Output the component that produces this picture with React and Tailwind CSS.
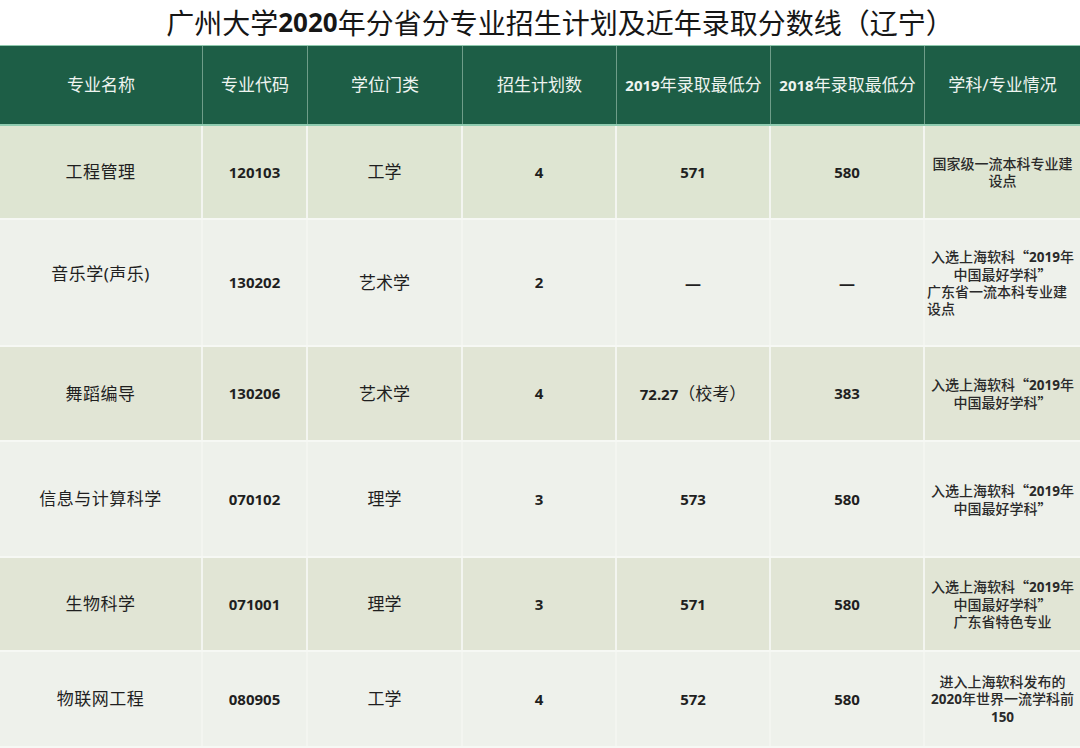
const font = { fontFamily: '"Noto Sans", "Noto Sans CJK SC", sans-serif' };

const cols = ["w-[203px]", "w-[105px]", "w-[155px]", "w-[154px]", "w-[154px]", "w-[154px]", "w-[155px]"];

function Num({ children }) {
  return <span className="font-bold text-[15px]">{children}</span>;
}

function SmallNum({ children }) {
  return <span className="inline-block leading-[17px] font-bold text-[13.5px]">{children}</span>;
}

// full-width chinese quotes
function Q({ children }) {
  return <span className="inline-block leading-[17px] font-['Noto_Sans_CJK_SC'] font-bold">{children}</span>;
}

function Note({ lines, align = "text-center" }) {
  return (
    <div className={"text-[14px] leading-[17px] font-medium text-[#2a2a2a] " + align}>
      {lines.map((l, i) => (
        <div key={i} className="whitespace-nowrap">
          {l}
        </div>
      ))}
    </div>
  );
}

const rankLines = [
  <>
    入选上海软科<Q>“</Q>
    <SmallNum>2019</SmallNum>年
  </>,
  <>
    中国最好学科<Q>”</Q>
  </>,
];

const rows = [
  {
    h: "h-[94px]",
    bg: "bg-[#dee5d2]",
    name: "工程管理",
    code: "120103",
    type: "工学",
    plan: "4",
    s19: <Num>571</Num>,
    s18: <Num>580</Num>,
    note: <Note lines={["国家级一流本科专业建", "设点"]} />,
  },
  {
    h: "h-[127px]",
    bg: "bg-[#eef1eb]",
    name: "音乐学(声乐)",
    nameClass: "pb-[17px]",
    code: "130202",
    type: "艺术学",
    plan: "2",
    s19: <span className="font-bold text-[16px]">—</span>,
    s18: <span className="font-bold text-[16px]">—</span>,
    note: (
      <div className="w-full px-[2px]">
        <Note lines={rankLines} />
        <Note lines={["广东省一流本科专业建", "设点"]} align="text-left" />
      </div>
    ),
  },
  {
    h: "h-[95px]",
    bg: "bg-[#e1e5d5]",
    name: "舞蹈编导",
    code: "130206",
    type: "艺术学",
    plan: "4",
    s19: (
      <span>
        <Num>72.27</Num>（校考）
      </span>
    ),
    s18: <Num>383</Num>,
    note: <Note lines={rankLines} />,
  },
  {
    h: "h-[116px]",
    bg: "bg-[#eef1eb]",
    name: "信息与计算科学",
    code: "070102",
    type: "理学",
    plan: "3",
    s19: <Num>573</Num>,
    s18: <Num>580</Num>,
    note: <Note lines={rankLines} />,
  },
  {
    h: "h-[94px]",
    bg: "bg-[#e1e5d5]",
    name: "生物科学",
    code: "071001",
    type: "理学",
    plan: "3",
    s19: <Num>571</Num>,
    s18: <Num>580</Num>,
    note: <Note lines={[...rankLines, "广东省特色专业"]} />,
  },
  {
    h: "h-[96px]",
    bg: "bg-[#eef1eb]",
    name: "物联网工程",
    code: "080905",
    type: "工学",
    plan: "4",
    s19: <Num>572</Num>,
    s18: <Num>580</Num>,
    note: (
      <Note
        lines={[
          "进入上海软科发布的",
          <>
            <SmallNum>2020</SmallNum>年世界一流学科前
          </>,
          <SmallNum>150</SmallNum>,
        ]}
      />
    ),
  },
];

const headers = [
  "专业名称",
  "专业代码",
  "学位门类",
  "招生计划数",
  <>
    <Num>2019</Num>年录取最低分
  </>,
  <>
    <Num>2018</Num>年录取最低分
  </>,
  "学科/专业情况",
];

export default function App() {
  return (
    <div style={font} className="w-[1080px] h-[748px] overflow-hidden bg-white text-[#1f1f1f]">
      <div className="h-[45px] flex items-center justify-center pl-[40px] text-[28px] text-[#161616] whitespace-nowrap">
        广州大学<span className="font-bold text-[26px]">2020</span>年分省分专业招生计划及近年录取分数线（辽宁）
      </div>

      <div className="flex h-[81px] bg-[#1d5e46] border-t border-[#8fc9ae] border-b-2 border-b-[#8fcbb0] text-[#eef4f0] text-[17px]">
        {headers.map((h, i) => (
          <div
            key={i}
            className={
              cols[i] +
              " flex items-center justify-center whitespace-nowrap" +
              (i < 6 ? " border-r border-[#6f9d89]" : "")
            }
          >
            {h}
          </div>
        ))}
      </div>

      {rows.map((r, idx) => (
        <div key={idx} className={"flex border-b-2 border-[#f6f8f4] " + r.h + " " + r.bg}>
          <div className={cols[0] + " flex items-center justify-center text-[17px] tracking-[0.5px] border-r-2 border-[#f3f5f0] " + (r.nameClass || "")}>
            {r.name}
          </div>
          <div className={cols[1] + " flex items-center justify-center border-r-2 border-[#f3f5f0]"}>
            <Num>{r.code}</Num>
          </div>
          <div className={cols[2] + " flex items-center justify-center text-[17px] border-r-2 border-[#f3f5f0]"}>
            {r.type}
          </div>
          <div className={cols[3] + " flex items-center justify-center border-r-2 border-[#f3f5f0]"}>
            <Num>{r.plan}</Num>
          </div>
          <div className={cols[4] + " flex items-center justify-center text-[17px] border-r-2 border-[#f3f5f0]"}>
            {r.s19}
          </div>
          <div className={cols[5] + " flex items-center justify-center border-r-2 border-[#f3f5f0]"}>
            {r.s18}
          </div>
          <div className={cols[6] + " flex items-center justify-center"}>{r.note}</div>
        </div>
      ))}
    </div>
  );
}
